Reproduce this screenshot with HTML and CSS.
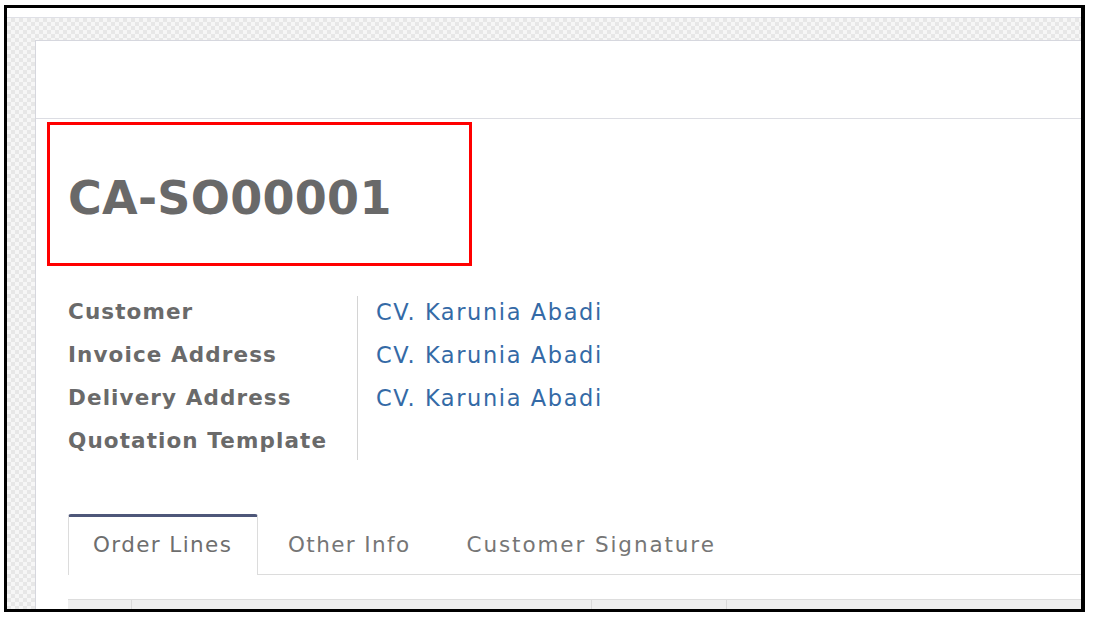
FILE: index.html
```html
<!DOCTYPE html>
<html>
<head>
<meta charset="utf-8">
<link rel="stylesheet" href="styles.css">
</head>
<body>
<div class="frame">
  <div class="topstrip"></div>
  <div class="backdrop">
    <div class="card">
      <div class="control-panel"></div>
      <div class="sheet">
        <div class="title-box">
          <h1 class="title">CA-SO00001</h1>
        </div>
        <div class="fields">
          <div class="labels">
            <div class="label">Customer</div>
            <div class="label">Invoice Address</div>
            <div class="label">Delivery Address</div>
            <div class="label">Quotation Template</div>
          </div>
          <div class="values">
            <a class="value">CV. Karunia Abadi</a>
            <a class="value">CV. Karunia Abadi</a>
            <a class="value">CV. Karunia Abadi</a>
          </div>
        </div>
        <div class="tabs">
          <div class="tab active">Order Lines</div>
          <div class="tab tab-other">Other Info</div>
          <div class="tab tab-sign">Customer Signature</div>
        </div>
        <div class="table-head">
          <div class="col c1"></div>
          <div class="col c2"></div>
          <div class="col c3"></div>
          <div class="col c4"></div>
        </div>
      </div>
    </div>
  </div>
</div>
</body>
</html>
```

FILE: styles.css
```css
html, body {
  margin: 0;
  padding: 0;
  background: #ffffff;
}

body {
  font-family: "DejaVu Sans", "Liberation Sans", sans-serif;
}

.frame {
  box-sizing: border-box;
  margin: 5px 0 0 4px;
  width: 1081px;
  height: 607px;
  border: 3px solid #000;
  border-right-width: 4px;
  overflow: hidden;
  display: flex;
  flex-direction: column;
  background: #fff;
}

.topstrip {
  height: 9px;
  flex: none;
  background: #fff;
  border-bottom: 1px solid #dfe0e6;
}

.backdrop {
  flex: 1;
  display: flex;
  padding: 22px 0 0 28px;
  background-color: #f1f1f1;
  background-image: repeating-conic-gradient(#e7e7e7 0 25%, #f6f6f6 0 50%);
  background-size: 8px 8px;
}

.card {
  flex: 1;
  background: #fff;
  border-left: 1px solid #d6d7de;
  border-top: 1px solid #d6d7de;
  display: flex;
  flex-direction: column;
}

.control-panel {
  height: 77px;
  flex: none;
  border-bottom: 1px solid #dcdde3;
}

.sheet {
  flex: 1;
  display: flex;
  flex-direction: column;
}

.title-box {
  box-sizing: border-box;
  margin: 3px 0 0 11px;
  width: 425px;
  height: 144px;
  border: 3px solid #ff0000;
  padding: 46px 0 0 18px;
}

.title {
  margin: 0;
  font-size: 46px;
  line-height: 54px;
  font-weight: 700;
  color: #696969;
  letter-spacing: 0.3px;
}

.fields {
  margin: 30px 0 0 32px;
  display: grid;
  grid-template-columns: 290px auto;
  align-items: start;
}

.labels {
  display: flex;
  flex-direction: column;
  gap: 11px;
  padding-bottom: 3px;
  border-right: 1px solid #d4d4d4;
}

.label {
  font-size: 21.5px;
  line-height: 32px;
  font-weight: 700;
  color: #6a6a6a;
  letter-spacing: 1.1px;
}

.values {
  display: flex;
  flex-direction: column;
  gap: 11px;
  padding-left: 18px;
}

.value {
  font-size: 22.5px;
  line-height: 32px;
  color: #346aa6;
  letter-spacing: 1.6px;
}

.tabs {
  margin: 54px 0 0 32px;
  display: flex;
  align-items: stretch;
  height: 61px;
  box-sizing: border-box;
  border-bottom: 1px solid #dcdcdc;
}

.tab {
  box-sizing: border-box;
  white-space: nowrap;
  font-size: 21.5px;
  letter-spacing: 1.4px;
  color: #767676;
  display: flex;
  align-items: center;
  padding: 0 24px 3px 24px;
  border: 1px solid transparent;
  border-top: 3px solid transparent;
  border-bottom: none;
}

.tab.active {
  width: 190px;
  color: #6e6e6e;
  background: #fff;
  border-color: #dcdcdc;
  border-top-color: #4e5779;
  border-radius: 3px 3px 0 0;
  height: 61px;
  margin-bottom: -1px;
  padding-right: 0;
}

.tab-other {
  padding-left: 29px;
  padding-right: 26px;
}

.tab-sign {
  padding-left: 28px;
  letter-spacing: 1.9px;
}

.table-head {
  margin: 24px 0 0 32px;
  height: 40px;
  display: flex;
  background: #eeeeee;
  border-top: 1px solid #dddddd;
}

.col {
  border-right: 1px solid #d9d9d9;
}

.c1 { width: 63px; }
.c2 { width: 459px; }
.c3 { width: 134px; }
.c4 { flex: 1; border-right: none; }
```
